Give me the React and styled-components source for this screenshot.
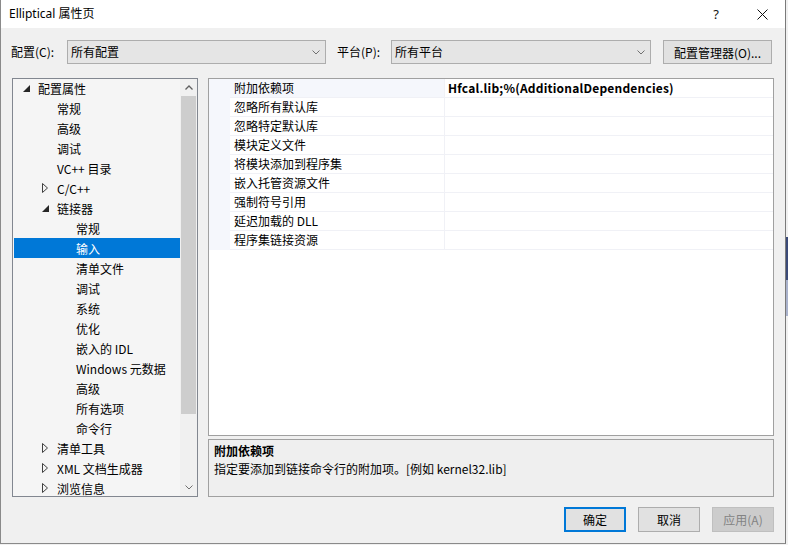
import React from 'react'
import styled, { createGlobalStyle } from 'styled-components'

const GlobalStyle = createGlobalStyle`
  html, body {
    margin: 0;
    padding: 0;
  }
  body {
    width: 788px;
    height: 545px;
    overflow: hidden;
    background: linear-gradient(to bottom, #f0f0f0 0, #f0f0f0 237px, #3b4a78 237px, #3b4a78 280px, #a9b2cc 280px, #a9b2cc 316px, #f0f0f0 316px);
    font-family: "Noto Sans CJK SC", "Noto Sans", sans-serif;
    font-size: 12px;
    color: #000;
  }
`

const treeItems = [
  { level: 0, label: '配置属性', arrow: 'open' },
  { level: 1, label: '常规' },
  { level: 1, label: '高级' },
  { level: 1, label: '调试' },
  { level: 1, label: 'VC++ 目录' },
  { level: 1, label: 'C/C++', arrow: 'closed' },
  { level: 1, label: '链接器', arrow: 'open' },
  { level: 2, label: '常规' },
  { level: 2, label: '输入', selected: true },
  { level: 2, label: '清单文件' },
  { level: 2, label: '调试' },
  { level: 2, label: '系统' },
  { level: 2, label: '优化' },
  { level: 2, label: '嵌入的 IDL' },
  { level: 2, label: 'Windows 元数据' },
  { level: 2, label: '高级' },
  { level: 2, label: '所有选项' },
  { level: 2, label: '命令行' },
  { level: 1, label: '清单工具', arrow: 'closed' },
  { level: 1, label: 'XML 文档生成器', arrow: 'closed' },
  { level: 1, label: '浏览信息', arrow: 'closed' },
]

const properties = [
  { name: '附加依赖项', value: 'Hfcal.lib;%(AdditionalDependencies)', active: true },
  { name: '忽略所有默认库' },
  { name: '忽略特定默认库' },
  { name: '模块定义文件' },
  { name: '将模块添加到程序集' },
  { name: '嵌入托管资源文件' },
  { name: '强制符号引用' },
  { name: '延迟加载的 DLL' },
  { name: '程序集链接资源' },
]

const Chevron = ({ up }) =>
  <svg width="8" height="5" viewBox="0 0 8 5">
    <polyline
      points={up ? '0.5,4.5 4,1 7.5,4.5' : '0.5,0.5 4,4 7.5,0.5'}
      fill="none"
      stroke={up ? '#606060' : '#707070'}
      strokeWidth={up ? 1.3 : 1}
    />
  </svg>

const TreeArrow = ({ kind }) =>
  kind === 'open'
    ? <svg width="7" height="7" viewBox="0 0 7 7"><polygon points="7,0 7,7 0,7" fill="#262626" /></svg>
    : <svg width="6" height="10" viewBox="0 0 6 10"><polygon points="0.5,0.5 5.5,5 0.5,9.5" fill="none" stroke="#404040" /></svg>

export default function App() {
  return (
    <>
      <GlobalStyle />
      <Dialog>
        <TitleBar>
          <Title>Elliptical 属性页</Title>
          <CaptionButton>?</CaptionButton>
          <CaptionButton>
            <svg width="11" height="11" viewBox="0 0 11 11">
              <path d="M0.5 0.5 L10.5 10.5 M10.5 0.5 L0.5 10.5" stroke="#111" strokeWidth="1" />
            </svg>
          </CaptionButton>
        </TitleBar>

        <Toolbar>
          <FieldLabel width={56}>配置(C):</FieldLabel>
          <Combo width={259}>
            <span>所有配置</span>
            <Chevron />
          </Combo>
          <FieldLabel width={54} offset={11}>平台(P):</FieldLabel>
          <Combo width={260}>
            <span>所有平台</span>
            <Chevron />
          </Combo>
          <ManagerButton>配置管理器(O)...</ManagerButton>
        </Toolbar>

        <Main>
          <Tree>
            <TreeList>
              {treeItems.map((item, i) =>
                <TreeRow key={i} level={item.level} selected={item.selected}>
                  <ArrowBox>{item.arrow && <TreeArrow kind={item.arrow} />}</ArrowBox>
                  {item.label}
                </TreeRow>
              )}
            </TreeList>
            <ScrollBar>
              <ScrollArrow><Chevron up /></ScrollArrow>
              <Thumb />
              <Track />
              <ScrollArrow><Chevron /></ScrollArrow>
            </ScrollBar>
          </Tree>

          <RightColumn>
            <Grid>
              <GridRows>
                {properties.map((p, i) =>
                  <GridRow key={i}>
                    <Gutter />
                    <NameCell active={p.active}>{p.name}</NameCell>
                    <ValueCell>{p.value}</ValueCell>
                  </GridRow>
                )}
              </GridRows>
            </Grid>
            <Description>
              <DescTitle>附加依赖项</DescTitle>
              <DescText>指定要添加到链接命令行的附加项。[例如 kernel32.lib]</DescText>
            </Description>
          </RightColumn>
        </Main>

        <Footer>
          <Button primary>确定</Button>
          <Button>取消</Button>
          <Button disabled>应用(A)</Button>
        </Footer>
      </Dialog>
    </>
  )
}

const Dialog = styled.div`
  box-sizing: border-box;
  width: 786px;
  height: 544px;
  background: #f0f0f0;
  border-left: 1px solid #8a8a8a;
  border-right: 1px solid #7a7a7a;
  border-bottom: 1px solid #8a8a8a;
  display: flex;
  flex-direction: column;
`
const TitleBar = styled.div`
  height: 28px;
  background: #fff;
  display: flex;
  align-items: center;
  padding-left: 8px;
`
const Title = styled.div`
  flex: 1;
  font-family: "Noto Sans", "Noto Sans CJK SC", sans-serif;
  font-size: 12px;
  line-height: 28px;
`
const CaptionButton = styled.div`
  width: 46px;
  height: 28px;
  display: flex;
  align-items: center;
  justify-content: center;
  font-size: 13px;
  font-family: "Noto Sans", sans-serif;
  color: #111;
`
const Toolbar = styled.div`
  margin-top: 12px;
  height: 24px;
  padding-left: 10px;
  display: flex;
  align-items: center;
`
const FieldLabel = styled.div`
  width: ${p => p.width}px;
  margin-left: ${p => p.offset || 0}px;
  line-height: 24px;
`
const Combo = styled.div`
  box-sizing: border-box;
  width: ${p => p.width}px;
  height: 24px;
  border: 1px solid #adadad;
  background: #e5e5e5;
  display: flex;
  align-items: center;
  justify-content: space-between;
  padding: 0 5px 0 3px;
  line-height: 22px;
`
const ManagerButton = styled.div`
  box-sizing: border-box;
  width: 109px;
  height: 24px;
  margin-left: 12px;
  border: 1px solid #adadad;
  background: #e1e1e1;
  display: flex;
  align-items: center;
  justify-content: center;
`
const Main = styled.div`
  margin-top: 14px;
  height: 419px;
  padding-left: 11px;
  display: flex;
  gap: 10px;
`
const Tree = styled.div`
  box-sizing: border-box;
  width: 186px;
  height: 419px;
  border: 1px solid #828790;
  background: #f5f5f5;
  display: flex;
  overflow: hidden;
`
const TreeList = styled.div`
  flex: 1;
  margin-top: -1px;
  overflow: hidden;
`
const TreeRow = styled.div`
  height: 20px;
  margin-left: 1px;
  padding-left: ${p => 6 + p.level * 19}px;
  display: flex;
  align-items: center;
  white-space: nowrap;
  line-height: 19px;
  background: ${p => p.selected ? '#0078d7' : 'transparent'};
  color: ${p => p.selected ? '#fff' : '#000'};
`
const ArrowBox = styled.span`
  width: 12px;
  margin-right: 6px;
  display: flex;
  align-items: center;
  justify-content: center;
`
const ScrollBar = styled.div`
  width: 17px;
  background: #f0f0f0;
  display: flex;
  flex-direction: column;
`
const ScrollArrow = styled.div`
  height: 17px;
  display: flex;
  align-items: center;
  justify-content: center;
`
const Thumb = styled.div`
  height: 318px;
  margin: 0 1px;
  background: #cdcdcd;
`
const Track = styled.div`
  flex: 1;
`
const RightColumn = styled.div`
  width: 566px;
  display: flex;
  flex-direction: column;
  gap: 3px;
`
const Grid = styled.div`
  box-sizing: border-box;
  height: 358px;
  border: 1px solid #a0a0a0;
  background: #fff;
`
const GridRows = styled.div`
  background: #f5f7fc;
`
const GridRow = styled.div`
  display: grid;
  grid-template-columns: 21px 214px 1fr;
  height: 19px;
`
const Gutter = styled.div``
const NameCell = styled.div`
  padding-left: 4px;
  line-height: 18px;
  background: ${p => p.active ? 'transparent' : '#fff'};
  border-bottom: 1px solid #f0f1f6;
  white-space: nowrap;
`
const ValueCell = styled.div`
  padding-left: 3px;
  line-height: 18px;
  font-weight: bold;
  letter-spacing: 0.2px;
  background: #fff;
  border-left: 1px solid #f0f1f6;
  border-bottom: 1px solid #f0f1f6;
  white-space: nowrap;
`
const Description = styled.div`
  box-sizing: border-box;
  height: 58px;
  border: 1px solid #a0a0a0;
  background: #efefef;
  padding: 2px 5px;
`
const DescTitle = styled.div`
  font-weight: bold;
  line-height: 18px;
`
const DescText = styled.div`
  line-height: 17px;
`
const Footer = styled.div`
  margin-top: 10px;
  padding-right: 11px;
  display: flex;
  justify-content: flex-end;
  gap: 12px;
`
const Button = styled.div`
  box-sizing: border-box;
  width: 62px;
  height: 25px;
  display: flex;
  align-items: center;
  justify-content: center;
  border: ${p => p.primary ? '2px solid #0078d7' : p.disabled ? '1px solid #bfbfbf' : '1px solid #adadad'};
  background: ${p => p.disabled ? '#cccccc' : '#e1e1e1'};
  color: ${p => p.disabled ? '#838383' : '#000'};
`
